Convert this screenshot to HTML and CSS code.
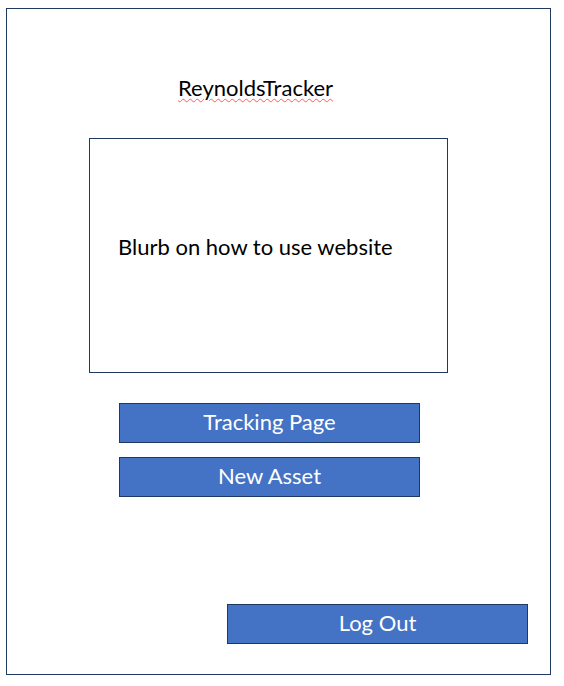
FILE: index.html
```html
<!DOCTYPE html>
<html>
<head>
<meta charset="utf-8">
<link rel="stylesheet" href="styles.css">
</head>
<body>
<div class="frame">
  <h1 class="title"><span class="spell">ReynoldsTracker</span></h1>
  <div class="blurb"><p class="blurb-text">Blurb on how to use website</p></div>
  <div class="actions">
    <a class="btn">Tracking Page</a>
    <a class="btn">New Asset</a>
  </div>
  <div class="footer">
    <a class="btn">Log Out</a>
  </div>
</div>
</body>
</html>
```
FILE: styles.css
```css
html, body {
  margin: 0;
  padding: 0;
  background: #ffffff;
}
body {
  font-family: Lato, "Open Sans", sans-serif;
  color: #000;
}
.frame {
  box-sizing: border-box;
  margin: 8px 0 0 6px;
  width: 545px;
  height: 667px;
  border: 1px solid #1f3864;
  display: flex;
  flex-direction: column;
  align-items: flex-start;
}
.title {
  margin: 66px 0 0 171px;
  font-size: 22px;
  font-weight: 400;
  line-height: 26px;
}
.spell {
  text-decoration: underline wavy #ff5a5a;
  text-decoration-thickness: 1px;
  text-underline-offset: 2px;
}
.blurb {
  box-sizing: border-box;
  margin: 37px 0 0 82px;
  width: 359px;
  height: 235px;
  border: 1px solid #1f3864;
  display: flex;
  align-items: center;
}
.blurb-text {
  margin: 0 0 18px 28px;
  font-size: 22px;
  line-height: 26px;
}
.actions {
  margin: 30px 0 0 112px;
  display: flex;
  flex-direction: column;
  gap: 14px;
}
.btn {
  box-sizing: border-box;
  width: 301px;
  height: 40px;
  background: #4472c4;
  border: 1px solid #1f3864;
  color: #fff;
  font-size: 22px;
  display: flex;
  align-items: center;
  justify-content: center;
  padding-bottom: 4px;
}
.footer {
  margin: 107px 0 0 220px;
}
```
